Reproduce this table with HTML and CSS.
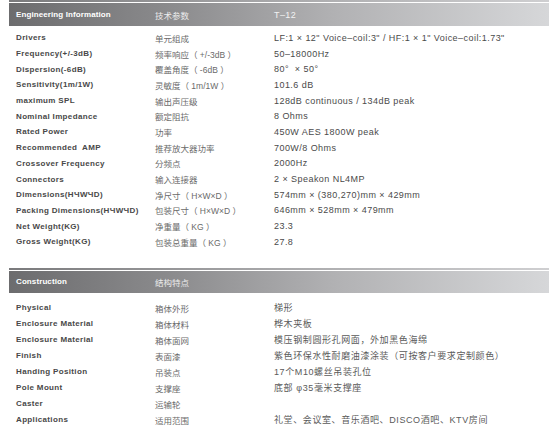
FILE: index.html
```html
<!DOCTYPE html>
<html>
<head>
<meta charset="utf-8">
<link rel="stylesheet" href="styles.css">
</head>
<body>
<div class="spec">
  <section class="block block-eng">
    <div class="rule"></div>
    <div class="head">
      <span class="h-en">Engineering Information</span>
      <span class="h-cn">技术参数</span>
      <span class="h-val">T–12</span>
    </div>
    <div class="rows">
      <div class="row"><span class="en">Drivers</span><span class="cn">单元组成</span><span class="val">LF:1 × 12" Voice–coil:3" / HF:1 × 1" Voice–coil:1.73"</span></div>
      <div class="row"><span class="en">Frequency(+/-3dB)</span><span class="cn">频率响应（ +/-3dB ）</span><span class="val">50–18000Hz</span></div>
      <div class="row"><span class="en">Dispersion(-6dB)</span><span class="cn">覆盖角度（ -6dB ）</span><span class="val">80°&nbsp; × 50°</span></div>
      <div class="row"><span class="en">Sensitivity(1m/1W)</span><span class="cn">灵敏度（ 1m/1W ）</span><span class="val">101.6 dB</span></div>
      <div class="row"><span class="en">maximum SPL</span><span class="cn">输出声压级</span><span class="val">128dB continuous / 134dB peak</span></div>
      <div class="row"><span class="en">Nominal Impedance</span><span class="cn">额定阻抗</span><span class="val">8 Ohms</span></div>
      <div class="row"><span class="en">Rated Power</span><span class="cn">功率</span><span class="val">450W AES 1800W peak</span></div>
      <div class="row"><span class="en">Recommended&nbsp; AMP</span><span class="cn">推荐放大器功率</span><span class="val">700W/8 Ohms</span></div>
      <div class="row"><span class="en">Crossover Frequency</span><span class="cn">分频点</span><span class="val">2000Hz</span></div>
      <div class="row"><span class="en">Connectors</span><span class="cn">输入连接器</span><span class="val">2 × Speakon NL4MP</span></div>
      <div class="row"><span class="en">Dimensions(HЧWЧD)</span><span class="cn">净尺寸（ H×W×D ）</span><span class="val">574mm × (380,270)mm × 429mm</span></div>
      <div class="row"><span class="en">Packing Dimensions(HЧWЧD)</span><span class="cn">包装尺寸（ H×W×D ）</span><span class="val">646mm × 528mm × 479mm</span></div>
      <div class="row"><span class="en">Net Weight(KG)</span><span class="cn">净重量（ KG ）</span><span class="val">23.3</span></div>
      <div class="row"><span class="en">Gross Weight(KG)</span><span class="cn">包装总重量（ KG ）</span><span class="val">27.8</span></div>
    </div>
  </section>

  <section class="block block-con">
    <div class="rule"></div>
    <div class="head">
      <span class="h-en">Construction</span>
      <span class="h-cn">结构特点</span>
      <span class="h-val"></span>
    </div>
    <div class="rows">
      <div class="row"><span class="en">Physical</span><span class="cn">箱体外形</span><span class="val zh">梯形</span></div>
      <div class="row"><span class="en">Enclosure Material</span><span class="cn">箱体材料</span><span class="val zh">桦木夹板</span></div>
      <div class="row"><span class="en">Enclosure Material</span><span class="cn">箱体面网</span><span class="val zh">模压钢制圆形孔网面，外加黑色海绵</span></div>
      <div class="row"><span class="en">Finish</span><span class="cn">表面漆</span><span class="val zh">紫色环保水性耐磨油漆涂装（可按客户要求定制颜色）</span></div>
      <div class="row"><span class="en">Handing Position</span><span class="cn">吊装点</span><span class="val zh">17个M10螺丝吊装孔位</span></div>
      <div class="row"><span class="en">Pole Mount</span><span class="cn">支撑座</span><span class="val zh">底部 φ35毫米支撑座</span></div>
      <div class="row"><span class="en">Caster</span><span class="cn">运输轮</span><span class="val zh"></span></div>
      <div class="row"><span class="en">Applications</span><span class="cn">适用范围</span><span class="val zh">礼堂、会议室、音乐酒吧、DISCO酒吧、KTV房间</span></div>
    </div>
  </section>
</div>
</body>
</html>
```

FILE: styles.css
```css
html, body {
  margin: 0;
  padding: 0;
  background: #ffffff;
}

body {
  font-family: "Liberation Sans", Arial, "Noto Sans CJK SC", sans-serif;
  color: #444;
  overflow: hidden;
}

.spec {
  padding-left: 9px;
  width: 540px;
}

.rule {
  height: 2px;
  background: linear-gradient(to right, #7a7a7c 0%, #a9a9ab 50%, #cfcfd1 100%);
}

.head {
  margin-top: 1px;
  height: 23px;
  display: grid;
  grid-template-columns: 139px 119px 1fr;
  align-items: center;
  padding-left: 7px;
  background: linear-gradient(to right, #6c6c6e 0%, #8b8b8d 30%, #b1b1b3 60%, #d6d7d9 100%);
}

.block-con .head {
  height: 22px;
}

.h-en {
  font-size: 8px;
  font-weight: bold;
  color: #ffffff;
  letter-spacing: 0.1px;
}

.h-cn {
  font-family: "Noto Sans CJK SC", sans-serif;
  font-size: 8.5px;
  color: #ececec;
}

.h-val {
  font-size: 9px;
  color: #f2f2f2;
  letter-spacing: 0.4px;
}

.block-eng .rows {
  padding-top: 4px;
  padding-bottom: 18px;
}

.block-con .rows {
  padding-top: 7px;
}

.row {
  display: grid;
  grid-template-columns: 139px 119px 1fr;
  align-items: center;
  padding-left: 7px;
  height: 15.7px;
}

.block-con .row {
  height: 16px;
}

.en {
  font-size: 8px;
  font-weight: bold;
  color: #484848;
  letter-spacing: 0.35px;
  white-space: nowrap;
}

.cn {
  font-family: "Liberation Sans", "Noto Sans CJK SC", sans-serif;
  font-size: 8.5px;
  color: #6a6a6a;
  white-space: nowrap;
}

.val {
  font-size: 9px;
  color: #4a4a4a;
  letter-spacing: 0.45px;
  white-space: nowrap;
}

.val.zh {
  font-family: "Liberation Sans", "Noto Sans CJK SC", sans-serif;
  color: #5a5a5a;
  letter-spacing: 0.6px;
}
```
